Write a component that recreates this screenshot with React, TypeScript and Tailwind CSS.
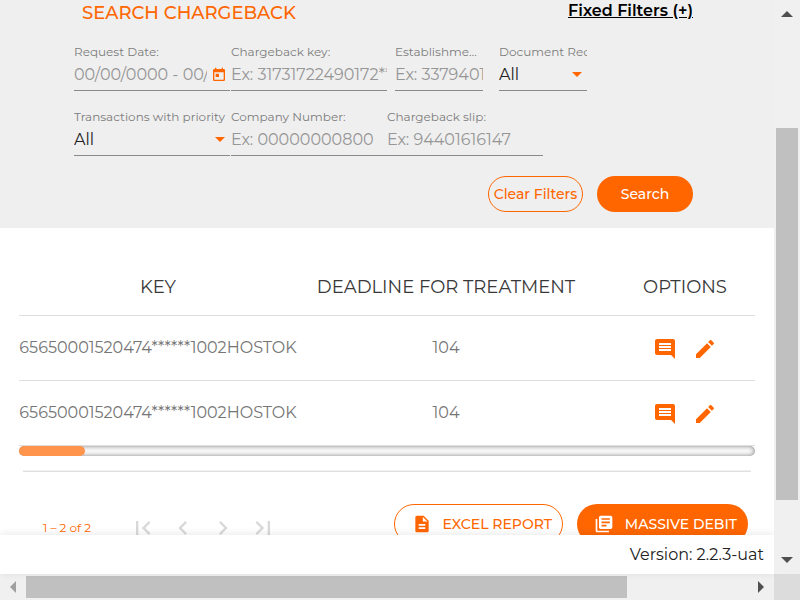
import type { ReactNode } from "react";

function Field({ id, label, width, truncate, children }: { id: string; label: string; width: string; truncate?: boolean; children: ReactNode }) {
  return (
    <div className={`${width} shrink-0`}>
      <label htmlFor={id} className={`block overflow-hidden text-xs leading-5 whitespace-nowrap text-[#7c7c7c] ${truncate ? "text-ellipsis" : ""}`}>
        {label}
      </label>
      <div className="flex h-[29px] items-center border-b border-[#8a8a8a] pb-[3px]">{children}</div>
    </div>
  );
}

const inputClass = "w-full min-w-0 flex-1 bg-transparent text-base leading-6 text-black outline-none placeholder:text-[#969696]";

function Caret() {
  return (
    <svg viewBox="0 0 10 5" className="pointer-events-none mr-[5px] h-[5px] w-[10px] shrink-0 fill-[#ff6600]">
      <path d="M0 0h10L5 5z" />
    </svg>
  );
}

function SelectBox({ id }: { id: string }) {
  return (
    <>
      <select id={id} className="min-w-0 flex-1 appearance-none bg-transparent text-base leading-6 text-[#222] outline-none">
        <option>All</option>
      </select>
      <Caret />
    </>
  );
}

function Icon({ d, className }: { d: string; className: string }) {
  return (
    <svg viewBox="0 0 24 24" fill="currentColor" className={className} aria-hidden="true">
      <path d={d} />
    </svg>
  );
}

const icons = {
  today: "M19 3h-1V1h-2v2H8V1H6v2H5c-1.11 0-1.99.9-1.99 2L3 19c0 1.1.89 2 2 2h14c1.1 0 2-.9 2-2V5c0-1.1-.9-2-2-2zm0 16H5V8h14v11zM7 10h5v5H7z",
  comment: "M21.99 4c0-1.1-.89-2-1.99-2H4c-1.1 0-2 .9-2 2v12c0 1.1.9 2 2 2h14l4 4-.01-18zM18 14H6v-2h12v2zm0-3H6V9h12v2zm0-3H6V6h12v2z",
  edit: "M3 17.25V21h3.75L17.81 9.94l-3.75-3.75L3 17.25zM20.71 7.04c.39-.39.39-1.02 0-1.41l-2.34-2.34c-.39-.39-1.02-.39-1.41 0l-1.83 1.83 3.75 3.75 1.83-1.83z",
  file: "M14 2H6c-1.1 0-1.99.9-1.99 2L4 20c0 1.1.89 2 1.99 2H18c1.1 0 2-.9 2-2V8l-6-6zm2 16H8v-2h8v2zm0-4H8v-2h8v2zm-3-5V3.500L18.500 9H13z",
  library: "M4 6H2v14c0 1.100.9 2 2 2h14v-2H4V6zm16-4H8c-1.100 0-2 .9-2 2v12c0 1.100.9 2 2 2h12c1.100 0 2-.9 2-2V4c0-1.100-.9-2-2-2zm-1 9H9V9h10v2zm-4 4H9v-2h6v2zm4-8H9V5h10v2z",
};

const pagers = [
  { name: "First page", d: "M18.41 16.59L13.82 12l4.590-4.590L17 6l-6 6 6 6zM6 6h2v12H6z" },
  { name: "Previous page", d: "M15.410 7.410L14 6l-6 6 6 6 1.410-1.410L10.830 12z" },
  { name: "Next page", d: "M10 6L8.590 7.410 13.170 12l-4.580 4.590L10 18l6-6z" },
  { name: "Last page", d: "M5.590 7.410L10.180 12l-4.590 4.590L7 18l6-6-6-6zM16 6h2v12h-2z" },
];

const rows = [
  { id: 1, key: "65650001520474******1002HOSTOK", deadline: 104 },
  { id: 2, key: "65650001520474******1002HOSTOK", deadline: 104 },
];

function Filters() {
  return (
    <section className="bg-[#efefef] pr-[81px] pb-4 pl-[74px]">
      <div className="flex h-[42px] items-start justify-between pl-2">
        <h1 className="pt-px text-lg leading-6 font-medium text-[#ff6600]">SEARCH CHARGEBACK</h1>
        <a href="#filters" className="text-base leading-[22px] font-semibold text-black underline">Fixed Filters (+)</a>
      </div>
      <div className="flex">
        <Field id="date" label="Request Date:" width="mr-px w-[156px]">
          <input id="date" placeholder="00/00/0000 - 00/00/0000" className={inputClass} />
          <button aria-label="Open calendar" className="ml-1 shrink-0 pt-px pr-[3px] text-[#ff6600]">
            <Icon d={icons.today} className="h-4 w-4" />
          </button>
        </Field>
        <Field id="key" label="Chargeback key:" width="mr-2 w-[156px]">
          <input id="key" placeholder="Ex: 31731722490172***" className={inputClass} />
        </Field>
        <Field id="establishment" label="Establishment:" width="mr-4 w-[88px]" truncate>
          <input id="establishment" placeholder="Ex: 3379401" className={inputClass} />
        </Field>
        <Field id="document" label="Document Requested:" width="w-[88px]">
          <SelectBox id="document" />
        </Field>
      </div>
      <div className="mt-4 flex">
        <Field id="priority" label="Transactions with priority" width="mr-px w-[156px]">
          <SelectBox id="priority" />
        </Field>
        <Field id="company" label="Company Number:" width="w-[156px]">
          <input id="company" placeholder="Ex: 00000000800" className={inputClass} />
        </Field>
        <Field id="slip" label="Chargeback slip:" width="w-[156px]">
          <input id="slip" placeholder="Ex: 94401616147" className={inputClass} />
        </Field>
      </div>
      <div className="mt-5 flex justify-end gap-[14px] text-sm font-medium">
        <button className="h-9 w-[95px] rounded-full border border-[#ff6600] whitespace-nowrap text-[#ff6600]">Clear Filters</button>
        <button className="h-9 w-24 rounded-full bg-[#ff6600] text-white">Search</button>
      </div>
    </section>
  );
}

function Results() {
  return (
    <section className="px-[19px] pt-[31px]">
      <table className="w-full table-fixed border-collapse text-center">
        <colgroup>
          <col className="w-[278px]" />
          <col />
          <col className="w-[160px]" />
        </colgroup>
        <thead>
          <tr className="h-14 border-b border-[#dedede] text-lg whitespace-nowrap text-[#383838]">
            <th className="font-normal">KEY</th>
            <th className="font-normal">DEADLINE FOR TREATMENT</th>
            <th className="pl-5 font-normal">OPTIONS</th>
          </tr>
        </thead>
        <tbody>
          {rows.map((row) => (
            <tr key={row.id} className="h-[65px] border-b border-[#dedede] text-base text-[#757575]">
              <td>{row.key}</td>
              <td>{row.deadline}</td>
              <td className="pl-5 text-[#ff6600]">
                <div className="flex justify-center gap-4 pt-[2px]">
                  <button aria-label="Comments"><Icon d={icons.comment} className="h-6 w-6" /></button>
                  <button aria-label="Edit"><Icon d={icons.edit} className="h-6 w-6" /></button>
                </div>
              </td>
            </tr>
          ))}
        </tbody>
      </table>
      <div className="h-[10px] rounded-full bg-[#fafafa] shadow-[inset_0_0_5px_#808080]">
        <div className="h-full w-[9%] rounded-full bg-[#ff944d]" />
      </div>
      <div className="mx-1 h-4 bg-linear-to-b from-white from-85% to-[#d8d8d8]" />
      <div className="mt-8 flex items-start justify-between pr-[7px] pl-6">
        <div className="flex items-center pt-1">
          <span className="w-20 text-xs text-[#ff6600]">1 – 2 of 2</span>
          {pagers.map((p) => (
            <button key={p.name} aria-label={p.name} disabled className="flex h-10 w-10 items-center justify-center text-[#d9d9d9]">
              <Icon d={p.d} className="h-7 w-7" />
            </button>
          ))}
        </div>
        <div className="flex gap-[14px] text-sm font-medium whitespace-nowrap">
          <button className="flex h-10 w-[169px] items-center justify-between rounded-full border border-[#ff6600] pr-[10px] pl-[17px] text-[#ff6600]">
            <Icon d={icons.file} className="h-5 w-5" />
            EXCEL REPORT
          </button>
          <button className="flex h-10 w-[171px] items-center justify-between rounded-full bg-[#ff6600] pr-[11px] pl-[17px] text-white">
            <Icon d={icons.library} className="h-5 w-5" />
            MASSIVE DEBIT
          </button>
        </div>
      </div>
    </section>
  );
}

function Arrow({ d, className }: { d: string; className: string }) {
  return (
    <svg viewBox="0 0 12 12" className={`h-3 w-3 shrink-0 ${className}`} aria-hidden="true">
      <path d={d} />
    </svg>
  );
}

export default function App() {
  return (
    <div className="flex h-screen flex-col overflow-hidden bg-white font-['Montserrat','Inter',sans-serif] font-normal">
      <div className="flex min-h-0 flex-1">
        <div className="flex min-w-0 flex-1 flex-col">
          <main className="min-h-0 flex-1 overflow-hidden">
            <Filters />
            <Results />
          </main>
          <footer className="relative flex h-[39px] shrink-0 items-center justify-end bg-white pr-[10px] text-base text-[#222] shadow-[0_-1px_8px_#00000018]">
            Version: 2.2.3-uat
          </footer>
        </div>
        <div className="relative flex w-[26px] shrink-0 flex-col items-center bg-[#f0f0f0] pt-2 pb-2">
          <Arrow d="M6 3l6 6H0z" className="fill-[#505050]" />
          <div className="h-[108px] shrink-0" />
          <div className="h-[372px] w-[22px] bg-[#c0c0c0]" />
          <div className="flex-1" />
          <Arrow d="M6 9l6-6H0z" className="fill-[#505050]" />
        </div>
      </div>
      <div className="flex h-[26px] shrink-0 bg-[#dcdcdc]">
        <div className="flex flex-1 items-center justify-between bg-[#f0f0f0] px-[7px]">
          <Arrow d="M3 6l6-6v12z" className="fill-[#a0a0a0]" />
          <div className="ml-[7px] h-[22px] w-[601px] bg-[#c0c0c0]" />
          <div className="flex-1" />
          <Arrow d="M9 6L3 0v12z" className="fill-[#505050]" />
        </div>
        <div className="w-[26px]" />
      </div>
    </div>
  );
}
